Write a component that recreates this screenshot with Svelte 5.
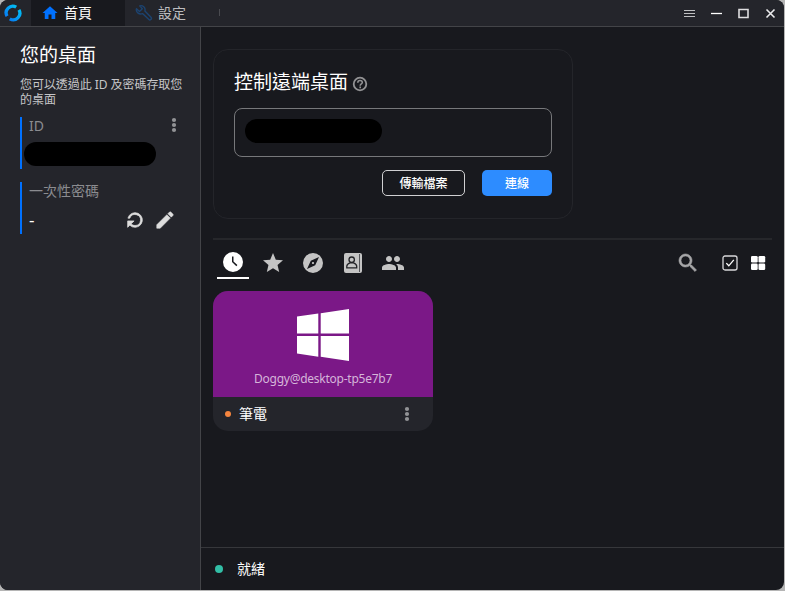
<script>
  const tabs = [
    { name: 'recent', d: 'M12 2a10 10 0 1 0 0 20 10 10 0 0 0 0-20zm3.3 14.2L11 12V6.5h1.5v4.9l3.9 3.7z' },
    { name: 'favorites', d: 'M12 17.27 18.18 21l-1.64-7.03L22 9.24l-7.19-.61L12 2 9.19 8.63 2 9.24l5.46 4.73L5.82 21z' },
    { name: 'discovered', d: 'M12 10.9c-.61 0-1.1.49-1.1 1.1s.49 1.1 1.1 1.1 1.1-.49 1.1-1.1-.49-1.1-1.1-1.1zM12 2a10 10 0 1 0 0 20 10 10 0 0 0 0-20zm2.19 12.19L6 18l3.81-8.19L18 6z' },
    { name: 'book', d: '' },
    { name: 'group', d: 'M16 11c1.66 0 2.99-1.34 2.99-3S17.66 5 16 5s-3 1.34-3 3 1.34 3 3 3zm-8 0c1.66 0 2.99-1.34 2.99-3S9.66 5 8 5 5 6.34 5 8s1.34 3 3 3zm0 2c-2.33 0-7 1.17-7 3.5V19h14v-2.5C15 14.17 10.33 13 8 13zm8 0c-.29 0-.62.02-.97.05 1.16.84 1.97 1.97 1.97 3.45V19h6v-2.5c0-2.33-4.67-3.5-7-3.5z' }
  ];
</script>

{#snippet dots()}
  <svg class="dots" width="6" height="16" viewBox="0 0 6 16"><circle cx="3" cy="3" r="2.1"/><circle cx="3" cy="8" r="2.1"/><circle cx="3" cy="13" r="2.1"/></svg>
{/snippet}

<div class="window">
  <header>
    <div class="logo">
      <svg width="18" height="18" viewBox="0 0 18 18" fill="none" stroke-width="3.3">
        <defs><linearGradient id="ring" x1="1" y1="0" x2="0" y2="1"><stop offset="0" stop-color="#00c8f5"/><stop offset="1" stop-color="#0874f3"/></linearGradient></defs>
        <path d="M12.2 3.2A6.6 6.6 0 0 0 3.1 12.2M5.8 14.8A6.6 6.6 0 0 0 14.9 5.8" stroke="url(#ring)"/>
      </svg>
    </div>
    <div class="tab active">
      <svg width="18" height="18" viewBox="0 0 24 24" fill="#0071ff"><path d="M10 20v-6h4v6h5v-8h3L12 3 2 12h3v8z"/></svg>
      <span>首頁</span>
    </div>
    <div class="tab">
      <svg width="18" height="18" viewBox="0 0 18 18" fill="none" stroke="#1c4370" stroke-linejoin="round"><path d="m1.500 4.700 3 2.800 2.800-2.700L4.700 1.900c2.900-1 6.100 1.600 5.200 5l6.300 6.700c1 1.200-1.100 3.200-2.300 2L7.500 9.600C4 10.900.5 8.100 1.500 4.700z" stroke-width="1.400"/></svg>
      <span>設定</span>
    </div>
    <i class="tick"></i>
    <svg class="controls" width="96" height="14" viewBox="0 0 96 14" fill="none" stroke="#fff">
      <path d="M0 4.5h11M0 7.5h11M0 10.5h11" stroke="#bfc0c2"/>
      <path d="M27 7.5h11" stroke-width="1.3"/>
      <path d="M55 3.5h9v8h-9z" stroke="#dedee0" stroke-width="1.6"/>
      <path d="m82.500 3.500 8 8m0-8-8 8" stroke="#ececee" stroke-width="1.600"/>
    </svg>
  </header>

  <div class="body">
    <aside>
      <h1>您的桌面</h1>
      <p>您可以透過此 ID 及密碼存取您的桌面</p>
      <section class="field">
        <div class="label id"><span>ID</span>{@render dots()}</div>
        <div class="mask"></div>
      </section>
      <section class="field password">
        <div class="label">一次性密碼</div>
        <div class="value">
          <span>-</span>
          <svg class="refresh" width="22" height="22" viewBox="0 0 24 24" fill="#ddd"><g transform="translate(24 0) scale(-1 1)"><path d="M17.65 6.35A8 8 0 1 0 19.73 14h-2.08A6 6 0 1 1 12 6c1.66 0 3.14.69 4.22 1.78L13 11h7V4z" transform="matrix(1 0 0 -1 0 24)" stroke="#ddd" stroke-width=".8"/></g></svg>
          <svg width="22" height="22" viewBox="0 0 24 24" fill="#ddd" stroke="#ddd" stroke-width=".6"><path d="M3 17.25V21h3.75L17.81 9.94l-3.75-3.75zM20.71 7.04c.39-.39.39-1.02 0-1.41l-2.34-2.34a1 1 0 0 0-1.41 0l-1.83 1.83 3.75 3.75z"/></svg>
        </div>
      </section>
    </aside>

    <main>
      <div class="content">
        <section class="connect">
          <h2>控制遠端桌面
            <svg width="16" height="16" viewBox="0 0 16 16" fill="none" stroke="#929294" stroke-width="1.8"><circle cx="8" cy="8" r="6.3"/><path d="M5.8 6.7c0-3 4.5-2.9 4.5-.2C10.3 8 8.2 8 8.2 9.7M8.2 10.6v1.6" stroke-width="1.6"/></svg>
          </h2>
          <div class="input"><div class="mask"></div></div>
          <div class="buttons"><button>傳輸檔案</button><button class="primary">連線</button></div>
        </section>
        <hr />
        <nav>
          {#each tabs as tab}
            <div class="peer-tab" class:selected={tab.name === 'recent'}>
              {#if tab.name === 'book'}
                <svg width="20" height="22" viewBox="0 0 20 22"><rect x="1" y="1" width="18" height="20" rx="2" fill="#c4c4c4"/><path d="M16.5 2v18" stroke="#55565a"/><g fill="none" stroke="#222327" stroke-width="1.3"><circle cx="8.7" cy="7.7" r="2.7"/><path d="M3.8 15.8v-1.5c0-2 1.8-3 3.2-3.5h3.5c1.4.5 3.2 1.5 3.2 3.5v1.5z"/></g></svg>
              {:else}
                <svg width="24" height="24" viewBox="0 0 24 24"><path d={tab.d}/></svg>
              {/if}
            </div>
          {/each}
          <div class="tools">
            <svg width="24" height="24" viewBox="0 0 24 24" fill="#a6a6a8" stroke="#a6a6a8" stroke-width=".6"><path d="M15.5 14h-.79l-.28-.27A6.5 6.5 0 1 0 13.73 14.43l.27.28v.79l5 4.99L20.49 19zm-6 0C7.01 14 5 11.99 5 9.5S7.01 5 9.5 5 14 7.01 14 9.5 11.99 14 9.5 14z"/></svg>
            <svg class="check" width="16" height="16" viewBox="0 0 16 16" fill="none" stroke="#d8d8da"><rect x="1" y="1" width="14" height="14" rx="2" stroke-width="1.3"/><path d="m4.300 8.100 2.500 2.700 5-6" stroke="#fff" stroke-width="1.300"/></svg>
            <svg class="grid" width="16" height="16" viewBox="0 0 16 16" fill="#fff"><rect x="1" y="1" width="6.7" height="6.5" rx="1.3"/><rect x="8.5" y="1" width="6.7" height="6.5" rx="1.3"/><rect x="1" y="8.5" width="6.7" height="6.5" rx="1.3"/><rect x="8.5" y="8.5" width="6.7" height="6.5" rx="1.3"/></svg>
          </div>
        </nav>
        <article>
          <div class="cover">
            <svg width="54" height="54" viewBox="0 0 54 54" fill="#fff"><path d="M1 8.5 22.3 5.5V25.5H1zM24.7 5.2 53 1v24.5H24.7zM1 28h21.3v20.7L1 45.5zM24.7 28H53v25l-28.3-4.2z"/></svg>
            <span>Doggy@desktop-tp5e7b7</span>
          </div>
          <div class="peer"><i></i><span>筆電</span>{@render dots()}</div>
        </article>
      </div>
      <footer><i></i><span>就緒</span></footer>
    </main>
  </div>
</div>

<style>
  :global(body) { background: #b5b5b5; }
  * { box-sizing: border-box; }
  svg { display: block; flex: none; }
  .window {
    width: 784px; height: 590px; border-radius: 8px; overflow: hidden;
    display: flex; flex-direction: column; background: #18191e; color: #fff;
    font-family: "Noto Sans", "Noto Sans CJK TC", sans-serif;
  }
  header { height: 27px; flex: none; display: flex; background: #24252b; border-bottom: 1px solid #434448; }
  .logo { width: 31px; padding: 4px 0 0 4px; }
  .tab { width: 94px; display: flex; align-items: center; gap: 5px; padding-left: 10px; font-size: 14px; line-height: 20px; color: #bcbcbe; }
  .tab.active { background: #18191e; color: #fff; }
  .tick { width: 1px; height: 7px; margin-top: 9px; background: #4a4b50; }
  .controls { margin: 6px 4px 0 auto; }
  .body { display: flex; flex: 1; min-height: 0; }
  aside { width: 201px; flex: none; padding: 16px 17px 0 20px; background: #24252b; border-right: 1px solid #434448; }
  h1, h2, p { margin: 0; font-weight: 400; }
  h1 { font-size: 19px; line-height: 24px; }
  p { margin: 10px -4px 0 0; font-size: 12px; line-height: 15px; letter-spacing: -.05px; color: #c6c6c8; }
  .field { height: 52px; margin-top: 10px; border-left: 2px solid #0071ff; }
  .field.password { margin-top: 13px; }
  .label { display: flex; padding-left: 7px; font-size: 14px; line-height: 18px; color: #8b8c90; }
  .label .dots { margin: 0 6px 0 auto; }
  .dots { fill: #929396; }
  .mask { background: #000; border-radius: 12px; height: 24px; }
  .field .mask { width: 132px; margin: 7px 0 0 2px; }
  .value { display: flex; align-items: center; padding: 9px 7px 0 7px; gap: 8px; font-size: 17px; line-height: 22px; }
  .refresh { margin-left: auto; }
  main { flex: 1; display: flex; flex-direction: column; min-width: 0; }
  .content { flex: 1; padding: 22px 12px 0; }
  .connect { width: 360px; height: 170px; padding: 20px 20px 0; border: 1px solid #24252a; border-radius: 15px; }
  h2 { display: flex; align-items: center; gap: 4px; font-size: 19px; line-height: 25px; }
  h2 svg { margin-top: 3px; }
  .input { width: 318px; height: 49px; margin-top: 13px; padding: 10px; border: 1px solid #77787b; border-radius: 8px; }
  .input .mask { width: 137px; }
  .buttons { display: flex; justify-content: flex-end; gap: 17px; margin-top: 13px; }
  button { width: 83px; height: 26px; padding: 0; border: 1px solid #d0d0d2; border-radius: 5px; background: none; color: #fff; font: 500 12px/20px "Noto Sans CJK TC", sans-serif; }
  button.primary { width: 70px; border: 0; background: #2d8cff; }
  hr { height: 2px; margin: 19px 0 0; border: 0; background: #26272b; }
  nav { display: flex; height: 51px; padding: 7px 4px 0; gap: 8px; }
  .peer-tab { width: 32px; height: 32px; display: flex; justify-content: center; align-items: flex-start; padding-top: 4px; border-bottom: 2px solid transparent; fill: #c4c4c4; }
  .peer-tab:nth-child(4) { padding-top: 5px; }
  .peer-tab.selected { padding-top: 3px; fill: #fff; border-color: #fff; }
  .tools { height: 32px; display: flex; align-items: center; margin-left: auto; }
  .check { margin-left: 22px; }
  .grid { margin: 0 2px 0 12px; }
  article { width: 220px; height: 140px; border-radius: 15px; overflow: hidden; background: #24252b; }
  .cover { height: 106px; display: flex; flex-direction: column; align-items: center; padding-top: 17px; background: #7b1887; color: #d5b5d9; font-size: 12px; line-height: 16px; }
  .cover span { margin-top: 9px; letter-spacing: -.25px; }
  .peer { height: 34px; display: flex; align-items: center; padding: 0 23px 0 12px; font-size: 14px; line-height: 20px; }
  .peer i { width: 6px; height: 6px; border-radius: 50%; background: #f5853f; }
  .peer span { margin-left: 8px; }
  .peer .dots { margin-left: auto; }
  footer { height: 43px; display: flex; align-items: center; padding-left: 14px; border-top: 1px solid #36373b; font-size: 14px; line-height: 20px; }
  footer i { width: 8px; height: 8px; border-radius: 50%; background: #32bea6; }
  footer span { margin-left: 14px; }
</style>
